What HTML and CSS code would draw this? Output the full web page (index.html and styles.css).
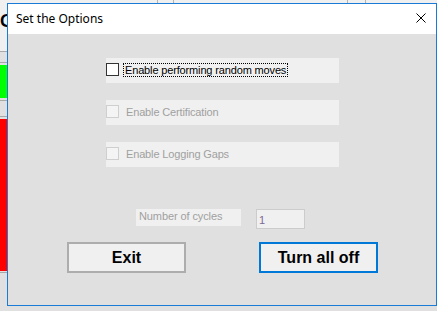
FILE: index.html
```html
<!DOCTYPE html>
<html>
<head>
<meta charset="utf-8">
<link rel="stylesheet" href="styles.css">
</head>
<body>
<div class="desktop">
  <div class="topstrip">
    <span class="tcol c1"></span><span class="tcol c2"></span><span class="tcol c3"></span><span class="tcol c4"></span>
  </div>
  <div class="side">
    <div class="side-head"><span class="g">G</span></div>
    <div class="line"></div>
    <div class="gap10"></div>
    <div class="line"></div>
    <div class="gap2"></div>
    <div class="green"></div>
    <div class="gap2"></div>
    <div class="line"></div>
    <div class="gap15"></div>
    <div class="line"></div>
    <div class="gap2"></div>
    <div class="red"></div>
    <div class="gap1"></div>
    <div class="line"></div>
  </div>

  <div class="dialog">
    <div class="titlebar">
      <span class="title">Set the Options</span>
      <svg class="close" width="10" height="10" viewBox="0 0 10 10"><path d="M0.5 0.5 L9.5 9.5 M9.5 0.5 L0.5 9.5" stroke="#000" stroke-width="1"/></svg>
    </div>
    <div class="content">
      <div class="panels">
        <div class="panel">
          <span class="box"></span>
          <span class="label focus">Enable performing random moves</span>
        </div>
        <div class="panel disabled">
          <span class="box"></span>
          <span class="label">Enable Certification</span>
        </div>
        <div class="panel disabled">
          <span class="box"></span>
          <span class="label">Enable Logging Gaps</span>
        </div>
      </div>
      <div class="cycles">
        <span class="cyc-label">Number of cycles</span>
        <span class="cyc-input">1</span>
      </div>
      <div class="buttons">
        <button class="btn">Exit</button>
        <button class="btn primary">Turn all off</button>
      </div>
    </div>
  </div>
</div>
</body>
</html>
```
FILE: styles.css
```css
html, body {
  margin: 0;
  padding: 0;
}
body {
  width: 437px;
  height: 311px;
  overflow: hidden;
  background: #e0e0e0;
  font-family: "Liberation Sans", Arial, sans-serif;
}
.desktop {
  position: relative;
  width: 437px;
  height: 311px;
}
.topstrip {
  position: absolute;
  left: 0;
  top: 0;
  width: 437px;
  height: 3px;
  background: #f0f0f0;
}
.tcol {
  position: absolute;
  top: 0;
  width: 1px;
  height: 3px;
  background: #b4b4b4;
}
.c1 { left: 157px; }
.c2 { left: 173px; }
.c3 { left: 347px; }
.c4 { left: 365px; }
.side {
  width: 7px;
  overflow: hidden;
}
.side-head {
  height: 51px;
  background: #f0f0f0;
  position: relative;
}
.g {
  position: absolute;
  left: 0;
  top: 11px;
  font-weight: bold;
  font-size: 18px;
  line-height: 20px;
  color: #000;
}
.line { height: 1px; background: #a8a8a8; }
.gap10 { height: 10px; }
.gap2 { height: 2px; }
.gap1 { height: 1px; }
.gap15 { height: 15px; }
.green { height: 33px; background: #00ff00; }
.red { height: 152px; background: #ff0000; }

.dialog {
  position: absolute;
  left: 7px;
  top: 3px;
  width: 428px;
  height: 301px;
  border: 1px solid #1a7bd6;
  background: #e0e0e0;
  display: flex;
  flex-direction: column;
}
.titlebar {
  height: 30px;
  background: #fff;
  display: flex;
  align-items: center;
  justify-content: space-between;
  padding: 0 10px 0 8px;
  flex: none;
}
.title {
  font-family: "Noto Sans", "Open Sans", sans-serif;
  font-size: 12px;
  color: #000;
  position: relative;
  top: -1px;
}
.close {
  position: relative;
  top: -1px;
}
.content {
  flex: 1;
  position: relative;
}
.panels {
  margin: 24px 0 0 98px;
  display: flex;
  flex-direction: column;
  gap: 17px;
}
.panel {
  width: 233px;
  height: 25px;
  background: #f0f0f0;
  display: flex;
  align-items: center;
  font-size: 11px;
  letter-spacing: -0.15px;
  color: #000;
}
.box {
  width: 11px;
  height: 11px;
  border: 1px solid #333;
  background: #fff;
  flex: none;
  margin-right: 7px;
  position: relative;
  top: -1px;
}
.label {
  position: relative;
  top: -1px;
}
.focus {
  outline: 1px dotted #000;
  outline-offset: 0px;
  padding: 0 1px 0 1px;
  margin-left: -2px;
  line-height: 12px;
}
.panel.disabled { color: #a0a0a0; }
.panel.disabled .box {
  border-color: #cfcfcf;
  background: #f4f4f4;
}
.cycles {
  margin: 42px 0 0 128px;
  display: flex;
  align-items: flex-start;
  gap: 15px;
}
.cyc-label {
  width: 99px;
  height: 17px;
  background: #f0f0f0;
  color: #a0a0a0;
  font-size: 11px;
  letter-spacing: -0.1px;
  line-height: 14px;
  padding-left: 3px;
  padding-right: 3px;
}
.cyc-input {
  width: 45px;
  height: 18px;
  border: 1px solid #cccccc;
  background: #f0f0f0;
  color: #7d6a93;
  font-size: 11px;
  line-height: 20px;
  padding-left: 2px;
  box-sizing: content-box;
}
.buttons {
  margin: 13px 0 0 59px;
  display: flex;
  gap: 73px;
}
.btn {
  width: 119px;
  height: 31px;
  border: 2px solid #adadad;
  background: #f0f0f0;
  font-family: "Liberation Sans", Arial, sans-serif;
  font-weight: bold;
  font-size: 16px;
  color: #000;
  padding: 0;
  margin: 0;
}
.btn.primary {
  border-color: #0078d7;
}
```
